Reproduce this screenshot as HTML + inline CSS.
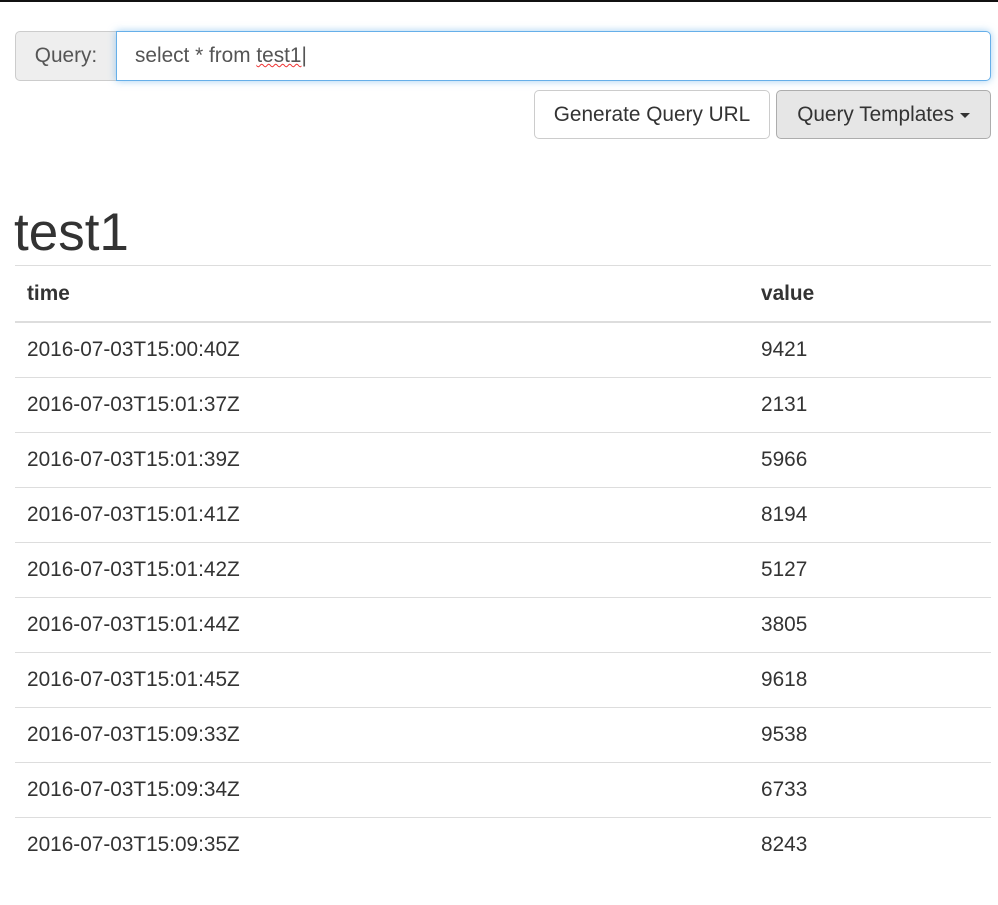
<!DOCTYPE html>
<html><head><style>
body{margin:0;background:#fff;font-family:"Liberation Sans",Arial,sans-serif;color:#333;font-size:20.8px;}
.top{height:2px;background:#111;}
.ig{position:absolute;left:15px;top:31px;width:976px;height:50px;}
.addon{position:absolute;left:0;top:0;width:100px;height:48px;background:#eee;border:1px solid #ccc;border-radius:5px 0 0 5px;line-height:48px;text-align:center;color:#555;}
.inp{position:absolute;left:101px;top:0;border:1px solid #66afe9;border-radius:0 5px 5px 0;box-shadow:0 0 8px rgba(102,175,233,.6);line-height:48px;padding-left:18px;box-sizing:border-box;width:875px;height:50px;color:#555;}
.sp{text-decoration:underline wavy #e33;text-decoration-thickness:1px;}
.btn{position:absolute;top:90px;height:49px;box-sizing:border-box;border:1px solid #ccc;border-radius:5px;line-height:47px;text-align:center;}
h1{position:absolute;left:14px;top:198px;margin:0;font-weight:normal;font-size:53px;line-height:70px;}
table{position:absolute;left:15px;top:265px;width:976px;border-collapse:collapse;}
td,th{padding:0 12px;height:54px;border-top:1px solid #ddd;text-align:left;}
th{height:55px;border-bottom:2px solid #ddd;font-weight:bold;}
td.v,th.v{width:218px;}
</style></head><body>
<div class="top"></div>
<div class="ig"><div class="addon">Query:</div><div class="inp">select * from <span class="sp">test1</span>|</div></div>
<div class="btn" style="left:534px;width:236px;background:#fff">Generate Query URL</div>
<div class="btn" style="left:776px;width:215px;background:#e6e6e6;border-color:#adadad">Query Templates <span style="display:inline-block;width:0;height:0;border-left:5px solid transparent;border-right:5px solid transparent;border-top:5px solid #333;vertical-align:middle"></span></div>
<h1>test1</h1>
<table>
<tr><th>time</th><th class="v">value</th></tr>
<tr><td>2016-07-03T15:00:40Z</td><td class="v">9421</td></tr>
<tr><td>2016-07-03T15:01:37Z</td><td class="v">2131</td></tr>
<tr><td>2016-07-03T15:01:39Z</td><td class="v">5966</td></tr>
<tr><td>2016-07-03T15:01:41Z</td><td class="v">8194</td></tr>
<tr><td>2016-07-03T15:01:42Z</td><td class="v">5127</td></tr>
<tr><td>2016-07-03T15:01:44Z</td><td class="v">3805</td></tr>
<tr><td>2016-07-03T15:01:45Z</td><td class="v">9618</td></tr>
<tr><td>2016-07-03T15:09:33Z</td><td class="v">9538</td></tr>
<tr><td>2016-07-03T15:09:34Z</td><td class="v">6733</td></tr>
<tr><td>2016-07-03T15:09:35Z</td><td class="v">8243</td></tr>
</table>
</body></html>
